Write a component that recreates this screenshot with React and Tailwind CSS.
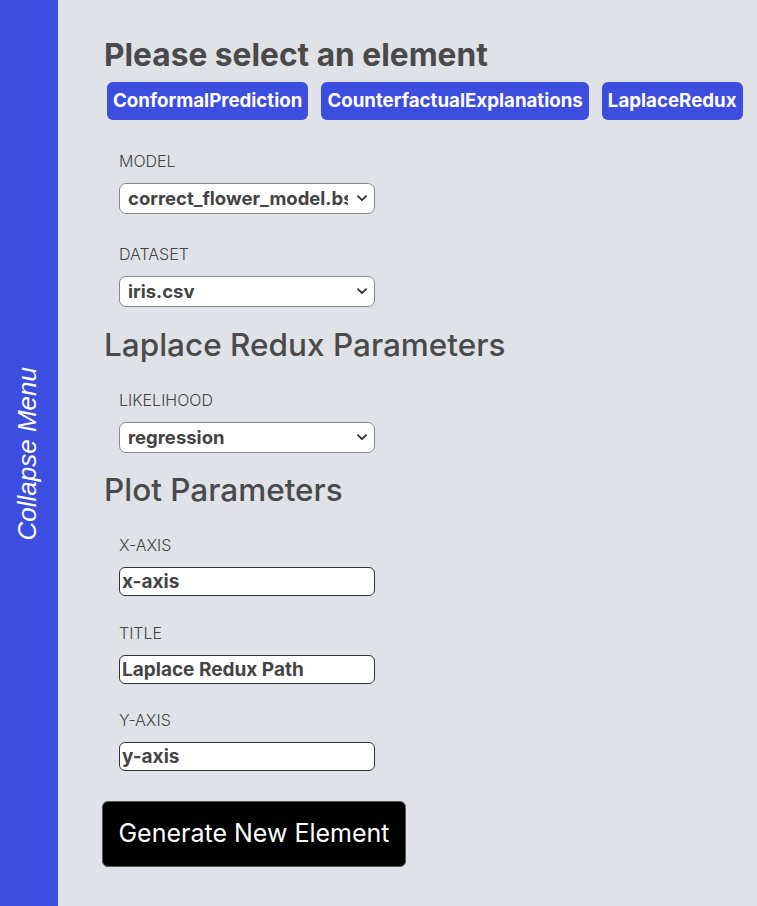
import { useState } from 'react'

const Field = ({ label, top = 'mt-[25px]', children }) => (
  <div className={`ml-[15px] ${top} flex flex-col`}>
    <label className="text-[16px] font-light uppercase leading-[24px] text-[#444]">{label}</label>
    <div className="mt-[10px] flex">{children}</div>
  </div>
)

const Select = ({ value, options }) => (
  <div className="relative w-[256px]">
    <select
      defaultValue={value}
      className="w-full h-[31px] appearance-none rounded-[7px] border border-[#888] bg-white pl-[8px] pr-[26px] text-[18.5px] font-bold text-[#444] outline-none"
    >
      {options.map((o) => (
        <option key={o}>{o}</option>
      ))}
    </select>
    <svg
      className="pointer-events-none absolute right-[8px] top-[12px]"
      width="10"
      height="7"
      viewBox="0 0 10 7"
      fill="none"
    >
      <path d="M1 1.2 5 5.2 9 1.2" stroke="#333" strokeWidth="1.9" strokeLinecap="round" strokeLinejoin="round" />
    </svg>
  </div>
)

const TextInput = ({ value }) => {
  const [v, setV] = useState(value)
  return (
    <input
      value={v}
      onChange={(e) => setV(e.target.value)}
      className="w-[256px] h-[29px] rounded-[6px] border border-[#333] bg-white px-[2px] text-[19px] font-bold text-[#444] outline-none"
    />
  )
}

export default function App() {
  const elements = ['ConformalPrediction', 'CounterfactualExplanations', 'LaplaceRedux']

  return (
    <div className="flex min-h-screen bg-[#dfe2e6] font-['Inter',sans-serif] text-[#4d4d4d]">
      <div className="w-[58px] shrink-0 bg-[#3c4ddf] flex items-center justify-center">
        <span className="-ml-[3px] [writing-mode:vertical-rl] rotate-180 italic text-white text-[26px] font-['Liberation_Sans',sans-serif] whitespace-nowrap">
          Collapse Menu
        </span>
      </div>

      <main className="pl-[46px] pt-[36px] pb-[40px]">
        <h1 className="text-[31.7px] font-bold leading-[38px] text-[#4a4a4a]">Please select an element</h1>
        <div className="mt-[8px] ml-[3px] flex gap-[13px]">
          {elements.map((e) => (
            <button
              key={e}
              className="rounded-md bg-[#3c4ddf] px-[6px] py-[6px] text-[18.7px] font-bold leading-[26px] text-white"
            >
              {e}
            </button>
          ))}
        </div>

        <Field label="Model" top="mt-[29px]">
          <Select value="correct_flower_model.bson" options={['correct_flower_model.bson']} />
        </Field>
        <Field label="Dataset" top="mt-[28px]">
          <Select value="iris.csv" options={['iris.csv']} />
        </Field>

        <h2 className="mt-[20px] text-[31.5px] font-medium leading-[36px] text-[#4a4a4a]">Laplace Redux Parameters</h2>
        <Field label="Likelihood">
          <Select value="regression" options={['regression', 'classification']} />
        </Field>

        <h2 className="mt-[19px] text-[31.5px] font-medium leading-[36px] text-[#4a4a4a]">Plot Parameters</h2>
        <Field label="X-axis">
          <TextInput value="x-axis" />
        </Field>
        <Field label="Title">
          <TextInput value="Laplace Redux Path" />
        </Field>
        <Field label="Y-axis" top="mt-[24px]">
          <TextInput value="y-axis" />
        </Field>

        <button className="mt-[30px] -ml-[2px] w-[304px] h-[66px] rounded-md border border-[#555] bg-black text-[25px] text-white">
          Generate New Element
        </button>
      </main>
    </div>
  )
}
